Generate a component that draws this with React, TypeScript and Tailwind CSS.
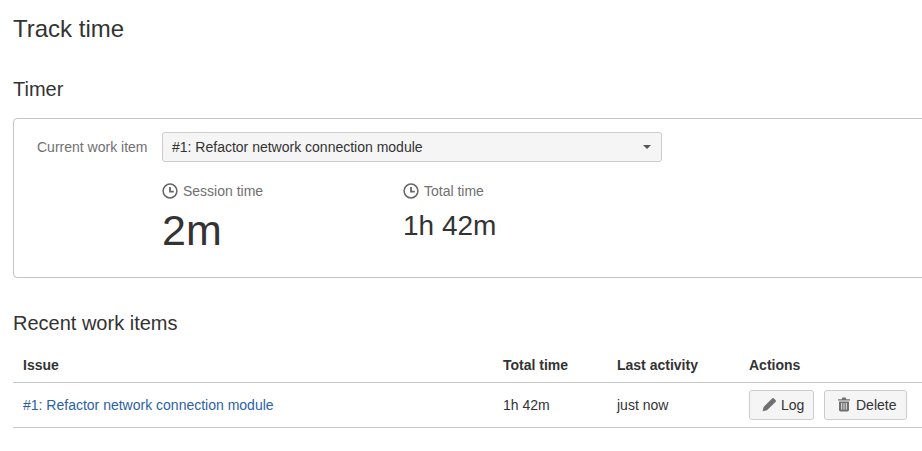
function Clock() {
  return (
    <svg width="16" height="16" viewBox="0 0 16 16" fill="none" stroke="#666" className="shrink-0">
      <circle cx="8" cy="8" r="6.9" strokeWidth="1.5" />
      <path d="M8 4V8.7H11.8" strokeWidth="1.8" />
    </svg>
  );
}

function Pencil() {
  return (
    <svg width="15" height="15" viewBox="0 0 15 15" fill="#707070" className="shrink-0">
      <path d="M.6 14.200l1-4.200L10.300 1.300a1 1 0 0 1 1.400 0l2 2a1 1 0 0 1 0 1.400L5 13.300z" />
    </svg>
  );
}

function Trash() {
  return (
    <svg width="14" height="15" viewBox="0 0 14 15" className="shrink-0">
      <path d="M4.600 2.200 5.400 .6h3.200l.8 1.600H13v1.400H1V2.200z" fill="#707070" />
      <path d="M2 4.400h10V13a1.400 1.400 0 0 1-1.400 1.400H3.400A1.400 1.400 0 0 1 2 13z" fill="#707070" />
      <path d="M4.700 6v6.600M7 6v6.600M9.300 6v6.600" stroke="#f5f5f5" strokeWidth="0.9" />
    </svg>
  );
}

function ActionButton({ icon, label, className }: { icon: React.ReactNode; label: string; className: string }) {
  return (
    <button className={`flex h-[30px] items-center rounded-[3px] border border-[#ccc] bg-[#f5f5f5] text-[14px] text-[#333] ${className}`}>
      {icon}
      {label}
    </button>
  );
}

export default function App() {
  return (
    <div className="h-[451px] w-[922px] overflow-hidden bg-white pl-[13px] font-['Liberation_Sans',Arial,sans-serif] text-[14px] leading-[20px] text-[#333]">
      <h1 className="pt-[15px] text-[24px] leading-[28px]">Track time</h1>

      <h2 className="mt-[35px] text-[20px] leading-[22px]">Timer</h2>

      {/* Timer */}
      <div className="mt-[18px] h-[160px] w-[925px] rounded-[4px] border border-[#c4c4c4] pt-[13px]">
        <div className="flex items-center">
          <label className="ml-[23px] w-[125px] text-[#707070]">Current work item</label>
          <div className="flex h-[30px] w-[500px] items-center justify-between rounded-[3px] border border-[#ccc] bg-[#f5f5f5] pl-[9px] pr-[10px]">
            <span>#1: Refactor network connection module</span>
            <span className="h-0 w-0 border-x-[4px] border-t-[4px] border-x-transparent border-t-[#555]" />
          </div>
        </div>

        <div className="ml-[148px] mt-[19px] flex">
          <div className="w-[241px]">
            <div className="flex items-center gap-[5px] text-[#707070]">
              <Clock />
              Session time
            </div>
            <div className="mt-[6px] text-[43px] leading-[46px]">2m</div>
          </div>
          <div>
            <div className="flex items-center gap-[5px] text-[#707070]">
              <Clock />
              Total time
            </div>
            <div className="mt-[7px] text-[28px] leading-[36px]">1h 42m</div>
          </div>
        </div>
      </div>

      <h2 className="mt-[34px] text-[20px] leading-[22px]">Recent work items</h2>

      {/* Recent work items */}
      <table className="mt-[12px] w-[909px] table-fixed border-collapse">
        <thead>
          <tr className="h-[36px] border-b border-[#c8c8c8] text-left">
            <th className="w-[490px] pl-[10px] pt-[2px] font-bold">Issue</th>
            <th className="w-[114px] pt-[2px] font-bold">Total time</th>
            <th className="w-[132px] pt-[2px] font-bold">Last activity</th>
            <th className="pt-[2px] font-bold">Actions</th>
          </tr>
        </thead>
        <tbody>
          <tr className="h-[45px] border-b border-[#c8c8c8]">
            <td className="pl-[10px]">
              <a href="#" className="text-[#2b62a6]">#1: Refactor network connection module</a>
            </td>
            <td>1h 42m</td>
            <td>just now</td>
            <td>
              <div className="flex gap-[10px]">
                <ActionButton icon={<Pencil />} label="Log" className="w-[65px] gap-[4px] pl-[12px]" />
                <ActionButton icon={<Trash />} label="Delete" className="w-[83px] gap-[5px] pl-[12px]" />
              </div>
            </td>
          </tr>
        </tbody>
      </table>
    </div>
  );
}
